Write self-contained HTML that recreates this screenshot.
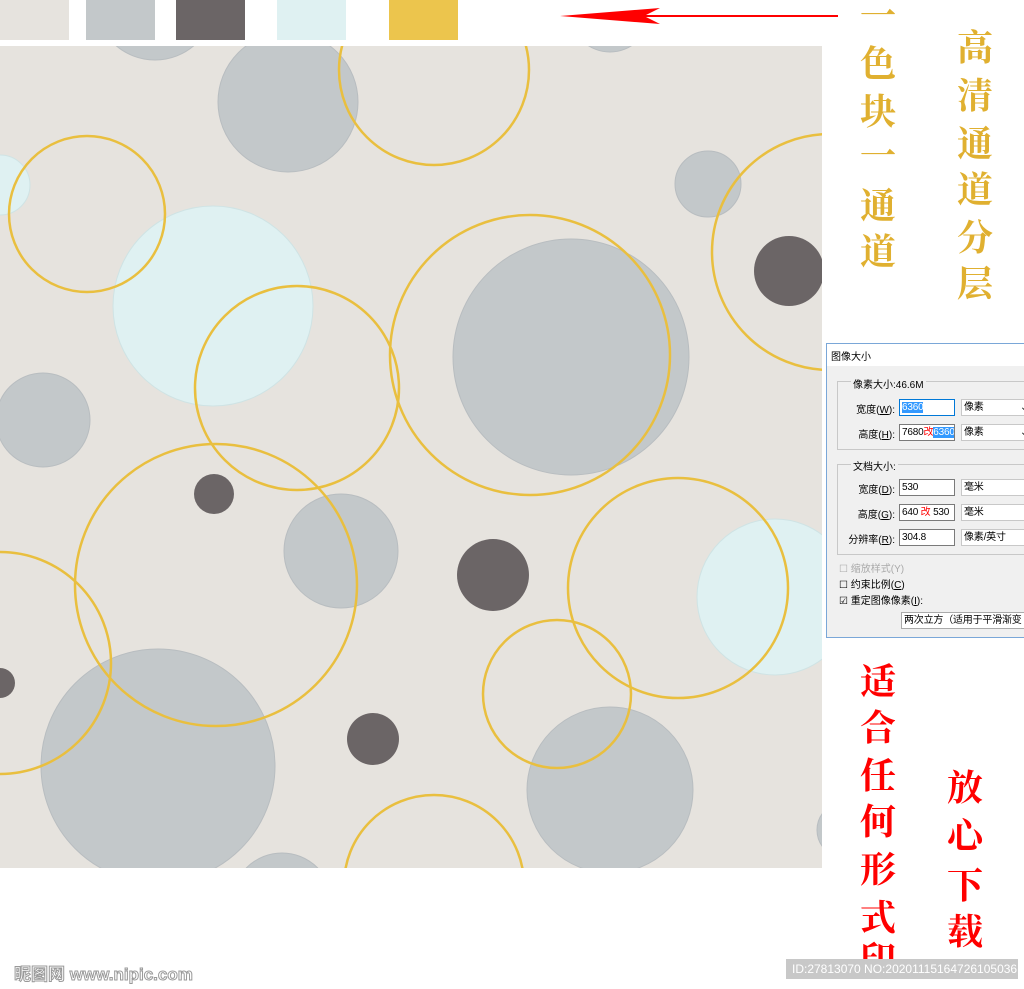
<!DOCTYPE html>
<html><head><meta charset="utf-8"><style>
body{margin:0;width:1024px;height:989px;background:#fff;position:relative;overflow:hidden;font-family:"Liberation Sans","Noto Sans CJK SC",sans-serif}
.sw{position:absolute;top:0;height:40px}
.col{position:absolute;font-family:"Noto Serif CJK SC","Noto Sans CJK SC",serif;font-weight:700;text-align:center;width:44px;font-size:36px}
.col span{position:absolute;left:0;width:44px}
.dlg{position:absolute;left:826px;top:343px;width:200px;height:293px;background:#f0f0f0;border:1px solid #7aa7d8;font-size:10px;color:#000}
.dlg .t{position:absolute;top:4px;left:4px}
.box{position:absolute;border:1px solid #c8c8c8}
.f{position:absolute;background:#fff;border:1px solid #7a7a7a;height:17px;line-height:15px;padding-left:2px;box-sizing:border-box;white-space:nowrap;overflow:hidden;letter-spacing:-0.2px}
.l{position:absolute;text-align:right}
</style></head><body>
<div class="sw" style="left:0;width:69px;background:#e6e3de"></div>
<div class="sw" style="left:86px;width:69px;background:#c3c8ca"></div>
<div class="sw" style="left:176px;width:69px;background:#6b6566"></div>
<div class="sw" style="left:277px;width:69px;background:#dff1f2"></div>
<div class="sw" style="left:389px;width:69px;background:#ecc54d"></div>
<svg style="position:absolute;left:560px;top:8px" width="280" height="16"><line x1="80" y1="8" x2="278" y2="8" stroke="#f00" stroke-width="2"/><polygon points="0,8 100,0 84,8 100,16" fill="#f00"/></svg>
<svg style="position:absolute;left:0;top:46px" width="822" height="822" viewBox="0 46 822 822">
<rect x="0" y="46" width="822" height="822" fill="#e6e3de"/>
<g fill="#c3c8ca" stroke="#b8bdc0" stroke-width="1">
<circle cx="155" cy="0" r="60"/><circle cx="288" cy="102" r="70"/><circle cx="610" cy="12" r="40"/>
<circle cx="708" cy="184" r="33"/><circle cx="571" cy="357" r="118"/><circle cx="43" cy="420" r="47"/>
<circle cx="341" cy="551" r="57"/><circle cx="158" cy="766" r="117"/><circle cx="610" cy="790" r="83"/>
<circle cx="282" cy="903" r="50"/><circle cx="845" cy="830" r="28"/></g>
<g fill="#dff1f2" stroke="#cfe3e4"><circle cx="0" cy="185" r="30"/><circle cx="213" cy="306" r="100"/><circle cx="775" cy="597" r="78"/></g>
<g fill="#6b6566"><circle cx="789" cy="271" r="35"/><circle cx="214" cy="494" r="20"/><circle cx="493" cy="575" r="36"/><circle cx="0" cy="683" r="15"/><circle cx="373" cy="739" r="26"/></g>
<g fill="none" stroke="#e9bf3f" stroke-width="2.5">
<circle cx="434" cy="70" r="95"/><circle cx="87" cy="214" r="78"/><circle cx="830" cy="252" r="118"/>
<circle cx="530" cy="355" r="140"/><circle cx="297" cy="388" r="102"/><circle cx="216" cy="585" r="141"/>
<circle cx="678" cy="588" r="110"/><circle cx="0" cy="663" r="111"/><circle cx="557" cy="694" r="74"/><circle cx="434" cy="885" r="90"/></g>
</svg>
<div class="col" style="left:856px;top:0;color:#e0b030"><span style="top:-12px">一</span><span style="top:36px">色</span><span style="top:84px">块</span><span style="top:128px">一</span><span style="top:178px">通</span><span style="top:224px">道</span></div>
<div class="col" style="left:953px;top:0;color:#e0b030"><span style="top:20px">高</span><span style="top:68px">清</span><span style="top:116px">通</span><span style="top:162px">道</span><span style="top:210px">分</span><span style="top:256px">层</span></div>
<div class="col" style="left:856px;top:0;color:#f00"><span style="top:654px">适</span><span style="top:700px">合</span><span style="top:748px">任</span><span style="top:794px">何</span><span style="top:842px">形</span><span style="top:890px">式</span><span style="top:932px">印</span></div>
<div class="col" style="left:943px;top:0;color:#f00"><span style="top:760px">放</span><span style="top:808px">心</span><span style="top:858px">下</span><span style="top:904px">载</span></div>
<div class="dlg">
<div style="position:absolute;left:0;top:0;right:0;height:22px;background:#fff"></div>
<div class="t">图像大小</div>
<div class="box" style="left:10px;top:37px;width:200px;height:67px"></div>
<div style="position:absolute;left:24px;top:32px;background:#f0f0f0;padding:0 2px">像素大小:46.6M</div>
<div class="l" style="left:20px;top:57px;width:48px">宽度(<u>W</u>):</div>
<div class="f" style="left:72px;top:55px;width:56px;border-color:#0078d7"><span style="background:#3399ff;color:#fff">6360</span></div>
<div class="f" style="left:134px;top:55px;width:70px;border-color:#c8c8c8">像素 <span style="position:absolute;left:58px">⌄</span></div>
<div class="l" style="left:20px;top:82px;width:48px">高度(<u>H</u>):</div>
<div class="f" style="left:72px;top:80px;width:56px">7680<span style="color:#f00">改</span><span style="background:#3399ff;color:#fff">6360</span></div>
<div class="f" style="left:134px;top:80px;width:70px;border-color:#c8c8c8">像素 <span style="position:absolute;left:58px">⌄</span></div>
<div class="box" style="left:10px;top:120px;width:200px;height:89px"></div>
<div style="position:absolute;left:24px;top:114px;background:#f0f0f0;padding:0 2px">文档大小:</div>
<div class="l" style="left:20px;top:137px;width:48px">宽度(<u>D</u>):</div>
<div class="f" style="left:72px;top:135px;width:56px">530</div>
<div class="f" style="left:134px;top:135px;width:70px;border-color:#c8c8c8">毫米</div>
<div class="l" style="left:20px;top:162px;width:48px">高度(<u>G</u>):</div>
<div class="f" style="left:72px;top:160px;width:56px">640 <span style="color:#f00">改</span> 530</div>
<div class="f" style="left:134px;top:160px;width:70px;border-color:#c8c8c8">毫米</div>
<div class="l" style="left:10px;top:187px;width:58px">分辨率(<u>R</u>):</div>
<div class="f" style="left:72px;top:185px;width:56px">304.8</div>
<div class="f" style="left:134px;top:185px;width:70px;border-color:#c8c8c8">像素/英寸</div>
<div style="position:absolute;left:12px;top:216px;color:#aaa">☐ 缩放样式(Y)</div>
<div style="position:absolute;left:12px;top:232px">☐ 约束比例(<u>C</u>)</div>
<div style="position:absolute;left:12px;top:248px">☑ 重定图像像素(<u>I</u>):</div>
<div class="f" style="left:74px;top:268px;width:130px;border-color:#aaa">两次立方（适用于平滑渐变</div>
</div>
<div style="position:absolute;left:14px;top:960px;font-size:17px;font-weight:bold;color:#fff;-webkit-text-stroke:1px #999">昵图网 www.nipic.com</div>
<div style="position:absolute;left:786px;top:959px;width:232px;height:20px;background:#c8c8c8;color:#fff;font-size:12px;line-height:20px;padding-left:6px;box-sizing:border-box">ID:27813070 NO:20201115164726105036</div>
</body></html>
